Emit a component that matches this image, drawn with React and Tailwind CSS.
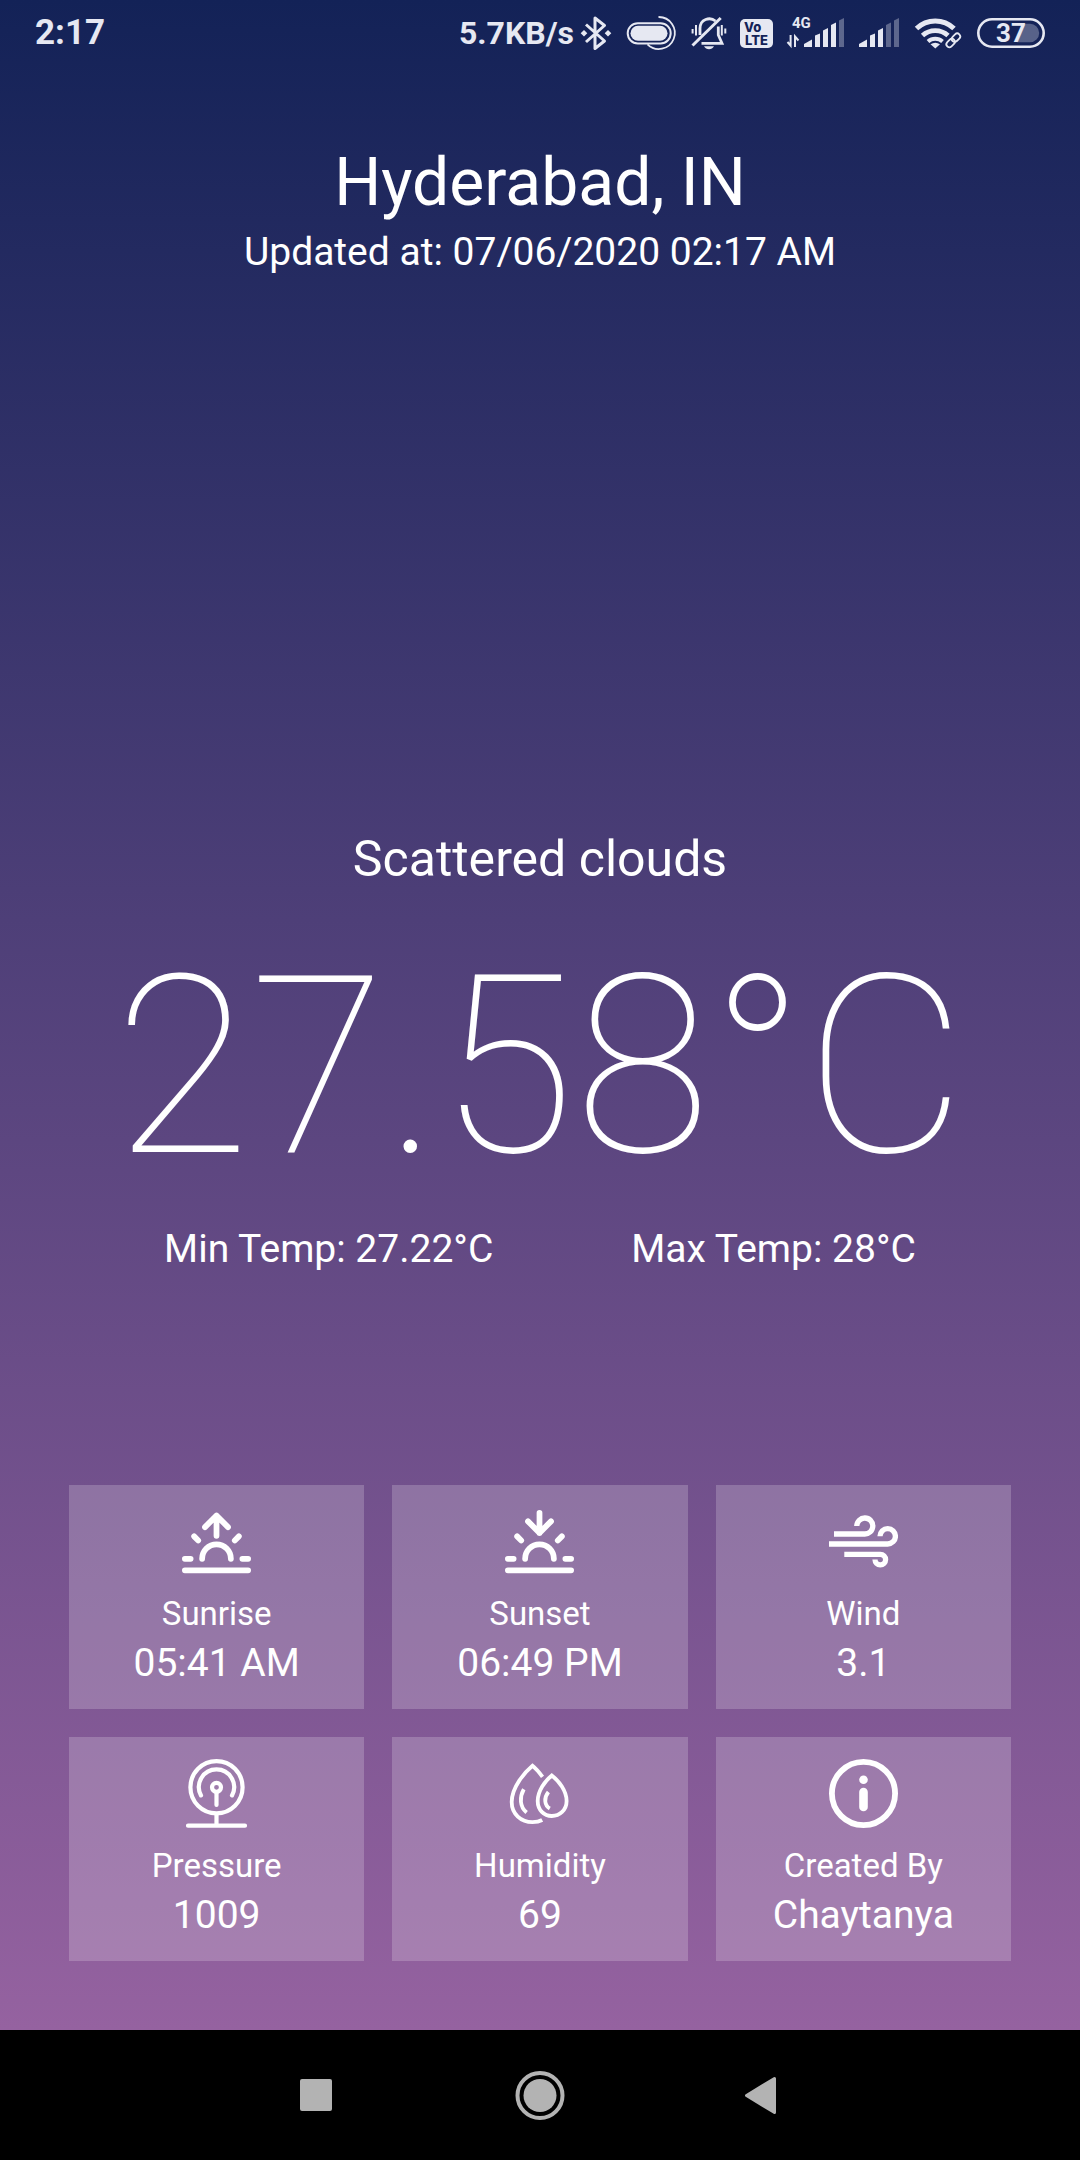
const FG = '#e6e8f2';

function StatusSvg({ width, label, children }) {
  return (
    <svg
      width={width}
      height="38"
      viewBox={`0 0 ${width} 38`}
      fill="none"
      stroke={FG}
      className="shrink-0 overflow-visible"
      role="img"
      aria-label={label}
    >
      {children}
    </svg>
  );
}

function SignalBars({ active }) {
  const bars = [
    'M0 33V30L8 25.5V33Z',
    'M11 33V21.5L16 19.5V33Z',
    'M19 33V16.5L24 14V33Z',
    'M27 33V11L32 8.5V33Z',
    'M35 33V6.5L40 4V33Z',
  ];
  return bars.map((d, i) => (
    <path key={d} d={d} fill={FG} fillOpacity={i < active ? 1 : 0.35} stroke="none" />
  ));
}

function StatusBar() {
  return (
    <header className="flex h-[66px] items-center justify-between px-[35px] text-[#e6e8f2]">
      <span className="text-[35px] leading-10 font-bold">2:17</span>
      <div className="flex items-center gap-[14px]">
        <div className="flex items-center gap-2">
          <span className="text-[32px] leading-9 font-bold">5.7KB/s</span>
          <StatusSvg width={30} label="Bluetooth">
            <path d="M4 10.5L22.5 27L13 34.5V4L22.5 11.5L4 28" strokeWidth="3" strokeLinejoin="round" />
            <path d="M2 16L5.3 19.3L2 22.6L-1.3 19.3ZM26 16L29.3 19.3L26 22.6L22.7 19.3Z" fill={FG} stroke="none" />
          </StatusSvg>
        </div>
        <StatusSvg width={50} label="Assistive touch">
          <rect x="1.7" y="9.2" width="43" height="20.2" rx="10.1" strokeWidth="2" />
          <rect x="4.5" y="11.8" width="37" height="15" rx="7.5" fill={FG} stroke="none" />
          <path d="M32.5 3A16 16 0 1 1 21.5 30.3" strokeWidth="1.8" />
        </StatusSvg>
        <StatusSvg width={36} label="Muted">
          <path d="M10 21V14.5C10 5 20 2.5 25.5 7" strokeWidth="2.8" />
          <path d="M28.3 12.5V21L32 29.3H11.5" strokeWidth="2.8" />
          <path d="M2.5 31.5L30.7 4" strokeWidth="3" />
          <path d="M14 32.3H24C23 34.4 21 35.3 19 35.3S15 34.4 14 32.3Z" fill={FG} stroke="none" />
          <path d="M2.6 15V19.5M6 11V21.5M31.8 11V21.5M35.3 14.5V19.5" strokeWidth="2" />
        </StatusSvg>
        <StatusSvg width={33} label="VoLTE">
          <rect y="5" width="33" height="29" rx="5" fill={FG} stroke="none" />
          <g fill="#132257" stroke="none" fontFamily="Inter, sans-serif" fontWeight="800">
            <text x="4" y="17.5" fontSize="13">Vo</text>
            <text x="5" y="30.5" fontSize="13">LTE</text>
          </g>
        </StatusSvg>
        <StatusSvg width={58} label="4G signal">
          <text x="5" y="14" fontSize="15" fontWeight="700" fill={FG} stroke="none">4G</text>
          <path d="M3.6 21V31.5L0.5 28M8 33V22.5L11.5 26.5" strokeWidth="2" />
          <g transform="translate(17)">
            <SignalBars active={4} />
          </g>
        </StatusSvg>
        <StatusSvg width={42} label="Signal">
          <SignalBars active={3} />
        </StatusSvg>
        <StatusSvg width={48} label="Wi-Fi">
          <path d="M1.5 14.5A27 27 0 0 1 39 14.5" strokeWidth="5" />
          <path d="M7.5 21.5A19 19 0 0 1 33 21.5" strokeWidth="4.8" />
          <path d="M13 27.5A11 11 0 0 1 27.5 27.5" strokeWidth="4" />
          <path d="M15.5 30.3Q20.3 27.3 25 30.3L20.3 34.5Z" fill={FG} stroke="none" />
          <g transform="translate(38.3 26.3) rotate(-45)">
            <path d="M-6 0H6" stroke="#132257" strokeWidth="9" strokeLinecap="round" />
            <rect x="-8.5" y="-3" width="9.5" height="6" rx="3" strokeWidth="1.8" />
            <rect x="-1" y="-3" width="9.5" height="6" rx="3" strokeWidth="1.8" />
          </g>
        </StatusSvg>
        <StatusSvg width={68} label="Battery 37 percent">
          <rect x="1.3" y="5.3" width="65.4" height="27.4" rx="13.7" strokeWidth="2.6" />
          <path d="M46 9.8H53A9.2 9.2 0 0 1 53 28.2H40Z" fill={FG} fillOpacity="0.32" stroke="none" />
          <text x="34" y="28" fontSize="26" fontWeight="700" textAnchor="middle" fill={FG} stroke="none">37</text>
        </StatusSvg>
      </div>
    </header>
  );
}

function SunBase({ children }) {
  return (
    <svg width="69" height="69" viewBox="0 0 24 24" fill="none" stroke="white" strokeWidth="2" strokeLinecap="round" strokeLinejoin="round" aria-hidden="true">
      <path d="M17 18a5 5 0 0 0-10 0M4.22 10.22l1.42 1.42M1 18h2M21 18h2M18.36 11.64l1.42-1.42M23 22H1" />
      {children}
    </svg>
  );
}

function SunriseIcon() {
  return (
    <SunBase>
      <path d="M12 3v7M8 7l4-4 4 4" />
    </SunBase>
  );
}

function SunsetIcon() {
  return (
    <SunBase>
      <path d="M12 2v7M16 5l-4 4-4-4" />
    </SunBase>
  );
}

function CardSvg({ strokeWidth, children }) {
  return (
    <svg width="69" height="69" viewBox="0 0 69 69" fill="none" stroke="white" strokeWidth={strokeWidth} aria-hidden="true">
      {children}
    </svg>
  );
}

function WindIcon() {
  return (
    <CardSvg strokeWidth="5.3">
      <path d="M5 27H35.5A8 8 0 1 0 27.8 19" />
      <path d="M0 37H58.7A7.7 7.7 0 1 0 51 29.3" />
      <path d="M15.3 47.3H51.3A5.3 5.3 0 1 1 46 52.6" />
    </CardSvg>
  );
}

function PressureIcon() {
  return (
    <CardSvg strokeWidth="4.2">
      <circle cx="34.5" cy="28.3" r="26.1" />
      <path d="M19 36.4A17.6 17.6 0 1 1 50 36.4" strokeLinecap="round" />
      <circle cx="34.5" cy="28.3" r="4.5" />
      <path d="M34.5 33V46M34.5 55V66M6 66.7H63" strokeLinecap="round" />
    </CardSvg>
  );
}

function HumidityIcon() {
  return (
    <CardSvg strokeWidth="3.8">
      <path d="M37.5 17.8C33.5 12.5 30 8.8 27.5 6.8C20 13 6.7 28 6.7 43C6.7 55 16 63.2 27.5 63.2C31 63.2 34.5 62.5 37.2 61" />
      <path d="M46.8 16.5C40 22 32.7 32 32.7 42C32.7 51 39 57 46.8 57S61.6 51 61.6 42C61.6 32 54 22 46.8 16.5Z" />
      <path d="M18.8 30.3C14.5 38 14.5 47.5 21.6 53.5M43.4 33C38.5 39 39.5 46.5 44.8 49.5" />
    </CardSvg>
  );
}

function InfoIcon() {
  return (
    <CardSvg strokeWidth="5.8">
      <circle cx="34.5" cy="34.5" r="31.6" />
      <circle cx="34.5" cy="20.8" r="4.3" fill="white" stroke="none" />
      <path d="M34.5 33V48" strokeWidth="8.6" strokeLinecap="round" />
    </CardSvg>
  );
}

const details = [
  { label: 'Sunrise', value: '05:41 AM', Icon: SunriseIcon },
  { label: 'Sunset', value: '06:49 PM', Icon: SunsetIcon },
  { label: 'Wind', value: '3.1', Icon: WindIcon },
  { label: 'Pressure', value: '1009', Icon: PressureIcon },
  { label: 'Humidity', value: '69', Icon: HumidityIcon },
  { label: 'Created By', value: 'Chaytanya', Icon: InfoIcon },
];

function DetailCard({ label, value, Icon }) {
  return (
    <div className="flex flex-col items-center bg-white/20 pt-[22px] pb-[23px]">
      <Icon />
      <dt className="mt-[18px] text-[33px] leading-[39px]">{label}</dt>
      <dd className="mt-[7px] text-[39px] leading-[46px]">{value}</dd>
    </div>
  );
}

function NavBar() {
  return (
    <nav className="flex h-[130px] items-center justify-center gap-[158px] bg-black">
      <button type="button" aria-label="Recent apps">
        <svg width="64" height="64" viewBox="0 0 64 64" fill="#b3b3b3">
          <rect x="14" y="16" width="32" height="32" rx="2" />
        </svg>
      </button>
      <button type="button" aria-label="Home">
        <svg width="64" height="64" viewBox="0 0 64 64" fill="#b3b3b3">
          <circle cx="32" cy="32.5" r="22.5" fill="none" stroke="#b3b3b3" strokeWidth="4" />
          <circle cx="32" cy="32.5" r="16.5" />
        </svg>
      </button>
      <button type="button" aria-label="Back">
        <svg width="64" height="64" viewBox="0 0 64 64" fill="#b3b3b3" stroke="#b3b3b3" strokeWidth="3" strokeLinejoin="round">
          <path d="M16.5 32.5L44.5 15.5V49.5Z" />
        </svg>
      </button>
    </nav>
  );
}

export default function App() {
  return (
    <div className="flex min-h-screen flex-col bg-black font-['Roboto',sans-serif] text-white">
      <div className="flex flex-1 flex-col bg-linear-to-b/srgb from-[#132257] to-[#9562a0]">
        <StatusBar />
        <main className="flex flex-1 flex-col justify-between px-[69px] pt-[78px] pb-[69px] text-center">
          <div>
            <h1 className="text-[66px] leading-[77px]">Hyderabad, IN</h1>
            <p className="mt-2 text-[39px] leading-[46px]">Updated at: 07/06/2020 02:17 AM</p>
          </div>
          <section className="mt-[342px]">
            <p className="text-[50px] leading-[58px]">Scattered clouds</p>
            <p className="mt-[35px] text-[248px] leading-[290px] font-[140]">27.58°C</p>
            <div className="mt-[13px] flex justify-center gap-[138px] text-[39px] leading-[46px]">
              <p>Min Temp: 27.22°C</p>
              <p>Max Temp: 28°C</p>
            </div>
          </section>
          <dl className="grid grid-cols-3 gap-7">
            {details.map((item) => (
              <DetailCard key={item.label} {...item} />
            ))}
          </dl>
        </main>
      </div>
      <NavBar />
    </div>
  );
}
